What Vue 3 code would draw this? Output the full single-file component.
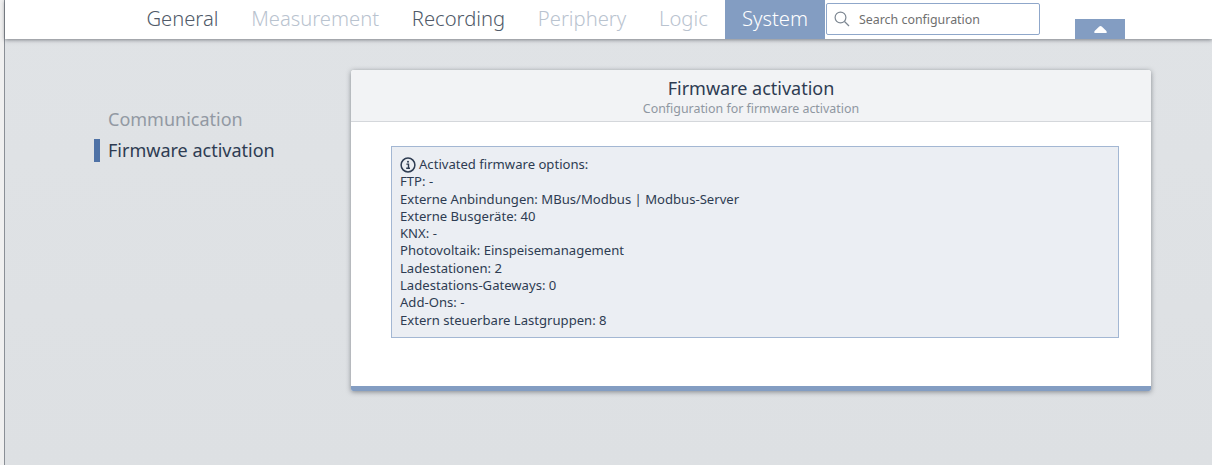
<script setup>
const tabs = [
  { label: 'General', dim: false },
  { label: 'Measurement', dim: true },
  { label: 'Recording', dim: false },
  { label: 'Periphery', dim: true },
  { label: 'Logic', dim: true },
  { label: 'System', active: true },
]
const lines = [
  'FTP: -',
  'Externe Anbindungen: MBus/Modbus | Modbus-Server',
  'Externe Busgeräte: 40',
  'KNX: -',
  'Photovoltaik: Einspeisemanagement',
  'Ladestationen: 2',
  'Ladestations-Gateways: 0',
  'Add-Ons: -',
  'Extern steuerbare Lastgruppen: 8',
]
</script>

<template>
  <div class="page">
    <div class="strip"></div>
    <div class="main">
      <header class="top">
        <nav class="tabs">
          <a
            v-for="t in tabs"
            :key="t.label"
            class="tab"
            :class="{ dim: t.dim, active: t.active }"
          >{{ t.label }}</a>
        </nav>
        <label class="search">
          <svg class="glass" width="16" height="16" viewBox="0 0 16 16" fill="none" stroke="#7d8792" stroke-width="1.2">
            <circle cx="6.5" cy="6.5" r="5.4" />
            <path d="M10.5 10.5 L15 15" />
          </svg>
          <span class="placeholder">Search configuration</span>
        </label>
        <button class="collapse">
          <svg width="13" height="7" viewBox="0 0 13 7"><path d="M6.5 0 Q7.2 0 8 .7 L12.4 5 Q13.4 7 11.5 7 H1.5 Q-.4 7 .6 5 L5 .7 Q5.8 0 6.5 0Z" fill="#fff" /></svg>
        </button>
      </header>
      <div class="content">
        <aside class="side">
          <div class="side-item muted">Communication</div>
          <div class="side-item current">Firmware activation</div>
        </aside>
        <section class="card">
          <div class="card-head">
            <div class="title">Firmware activation</div>
            <div class="subtitle">Configuration for firmware activation</div>
          </div>
          <div class="card-body">
            <div class="info">
              <div class="info-first">
                <svg class="i-icon" width="16" height="16" viewBox="0 0 16 16" fill="none">
                  <circle cx="8" cy="8" r="6.9" stroke="#2e3c52" stroke-width="1.5" />
                  <circle cx="8" cy="4.7" r="1" fill="#2e3c52" />
                  <path d="M6.4 7.1H8.5V11M6.2 11.3H10" stroke="#2e3c52" stroke-width="1.4" />
                </svg>
                <span>Activated firmware options:</span>
              </div>
              <div v-for="l in lines" :key="l" class="line">{{ l }}</div>
            </div>
          </div>
          <div class="card-foot"></div>
        </section>
      </div>
    </div>
  </div>
</template>

<style>
html, body { margin: 0; height: 100%; overflow: hidden; }
#app { height: 100%; }
</style>

<style scoped>
.page {
  display: flex;
  height: 465px;
  font-family: "Noto Sans", "Open Sans", sans-serif;
  color: #2e3c52;
  background: #fff;
}
.strip {
  width: 4px;
  background: #f0f0f0;
  border-right: 1px solid #8a8f96;
}
.main {
  flex: 1;
  display: flex;
  flex-direction: column;
  min-width: 0;
  background: linear-gradient(180deg, #e0e3e6 0%, #dde0e3 100%);
}
.top {
  height: 39px;
  display: flex;
  align-items: flex-start;
  padding-left: 125px;
  background: #fff;
  box-shadow: 0 1px 4px rgba(40, 45, 55, 0.55);
  position: relative;
  z-index: 1;
}
.tabs { display: flex; width: 695px; }
.tab {
  height: 39px;
  line-height: 37px;
  padding: 0 16.4px;
  font-size: 20.2px;
  font-weight: 300;
  color: #505a69;
}
.tab.dim { color: #b9c3cf; }
.tab.active {
  background: #839dc2;
  color: #fff;
  margin-left: auto;
  width: 100px;
  box-sizing: border-box;
  padding: 0;
  text-align: center;
}
.search {
  margin: 3px 0 0 1px;
  width: 205px;
  height: 30px;
  border: 1px solid #8fa7ca;
  border-radius: 2px;
  display: flex;
  align-items: center;
  padding-left: 7px;
}
.glass { flex: none; }
.placeholder {
  margin-left: 9px;
  font-size: 12.4px;
  color: #6f6f6f;
  white-space: nowrap;
}
.collapse {
  margin: 19px 0 0 35px;
  width: 50px;
  height: 20px;
  border: 0;
  padding: 0;
  background: #839dc2;
  display: flex;
  align-items: center;
  justify-content: center;
}
.content {
  flex: 1;
  display: flex;
  align-items: flex-start;
  padding: 31px 0 0 89px;
}
.side {
  width: 257px;
  padding-top: 38px;
  flex: none;
}
.side-item {
  font-size: 18px;
  line-height: 23px;
  padding-left: 14px;
  margin-bottom: 8px;
}
.side-item.muted { color: #9299a3; }
.side-item.current { border-left: 6px solid #4f72a6; padding-left: 8px; color: #2e3c52; }
.card {
  width: 800px;
  height: 321px;
  display: flex;
  flex-direction: column;
  background: #fff;
  border-radius: 3px 3px 2px 2px;
  box-shadow: 0 1px 5px rgba(40, 45, 55, 0.5);
  overflow: hidden;
}
.card-head {
  height: 51px;
  background: #f2f3f5;
  border-bottom: 1px solid #d4d7db;
  text-align: center;
}
.title {
  padding-top: 6px;
  font-size: 18px;
  line-height: 24px;
  color: #2e3c52;
}
.subtitle {
  padding-top: 1px;
  font-size: 12.4px;
  line-height: 15px;
  color: #8f97a1;
}
.card-body {
  flex: 1;
  padding: 24px 32px 0 40px;
}
.info {
  height: 190px;
  border: 1px solid #a3b7d3;
  background: #ebeef3;
  padding-left: 8px;
  font-size: 13.1px;
  line-height: 17.3px;
  color: #2e3c52;
}
.info-first {
  display: flex;
  align-items: center;
  gap: 3px;
  margin-top: 9px;
}
.i-icon { flex: none; }
.line { white-space: nowrap; }
.card-foot {
  height: 5px;
  background: #839dc2;
}
</style>
